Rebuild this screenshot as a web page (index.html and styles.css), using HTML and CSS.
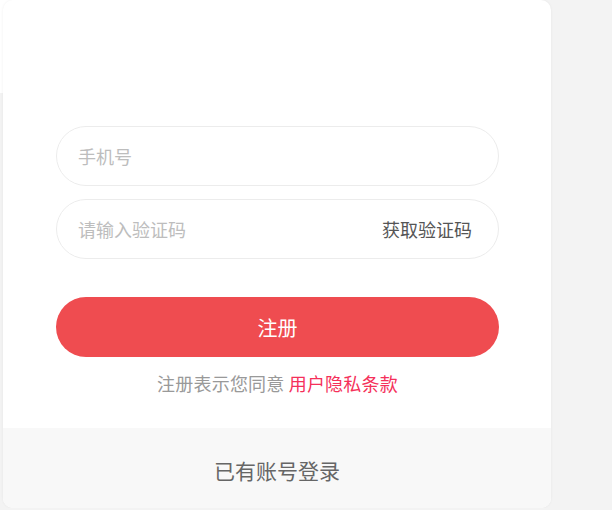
FILE: index.html
```html
<!DOCTYPE html>
<html lang="zh-CN">
<head>
    <meta charset="UTF-8" />
    <title>注册</title>
<link rel="stylesheet" href="styles.css">
</head>
<body>
    <div class="card">
        <div class="card_body">
            <div class="field">
                <input type="text" class="field_input" placeholder="手机号">
            </div>
            <div class="field">
                <input type="text" class="field_input" placeholder="请输入验证码">
                <span class="field_code">获取验证码</span>
            </div>
            <button class="btn_reg">注册</button>
            <p class="agree">注册表示您同意 <a href="#">用户隐私条款</a></p>
        </div>
        <div class="card_foot">已有账号登录</div>
    </div>
</body>
</html>
```

FILE: styles.css
```css
* {margin: 0; padding: 0; box-sizing: border-box;}
body {
    background: #f3f3f3 linear-gradient(#fff, #fff) no-repeat 0 0 / 20px 93px;
    font-family: "Microsoft YaHei", "Noto Sans CJK SC", sans-serif;
}
.card {
    width: 548px;
    margin-left: 3px;
    background: #fff;
    border-radius: 10px;
    overflow: hidden;
    box-shadow: 0 0 3px rgba(0, 0, 0, 0.06);
}
.card_body {
    padding: 126px 52px 33px 53px;
    display: flex;
    flex-direction: column;
}
.field {
    height: 60px;
    border: 1px solid #ececec;
    border-radius: 30px;
    display: flex;
    align-items: center;
    padding: 0 26px 0 21px;
    margin-bottom: 13px;
}
.field_input {
    flex: 1;
    border: none;
    outline: none;
    font-family: inherit;
    font-size: 18px;
    color: #333;
    background: transparent;
}
.field_input::placeholder {color: #bdbdbd;}
.field_code {
    font-size: 18px;
    color: #555;
}
.btn_reg {
    margin-top: 25px;
    height: 60px;
    border: none;
    border-radius: 30px;
    background: #ef4c50;
    color: #fff;
    font-family: inherit;
    font-size: 20px;
}
.agree {
    margin-top: 14px;
    text-align: center;
    font-size: 18px;
    line-height: 24px;
    letter-spacing: 0.2px;
    color: #999;
}
.agree a {color: #f5305a; text-decoration: none;}
.card_foot {
    height: 80px;
    background: #f8f8f8;
    display: flex;
    align-items: center;
    justify-content: center;
    padding-top: 4px;
    font-size: 21px;
    color: #666;
}
```
